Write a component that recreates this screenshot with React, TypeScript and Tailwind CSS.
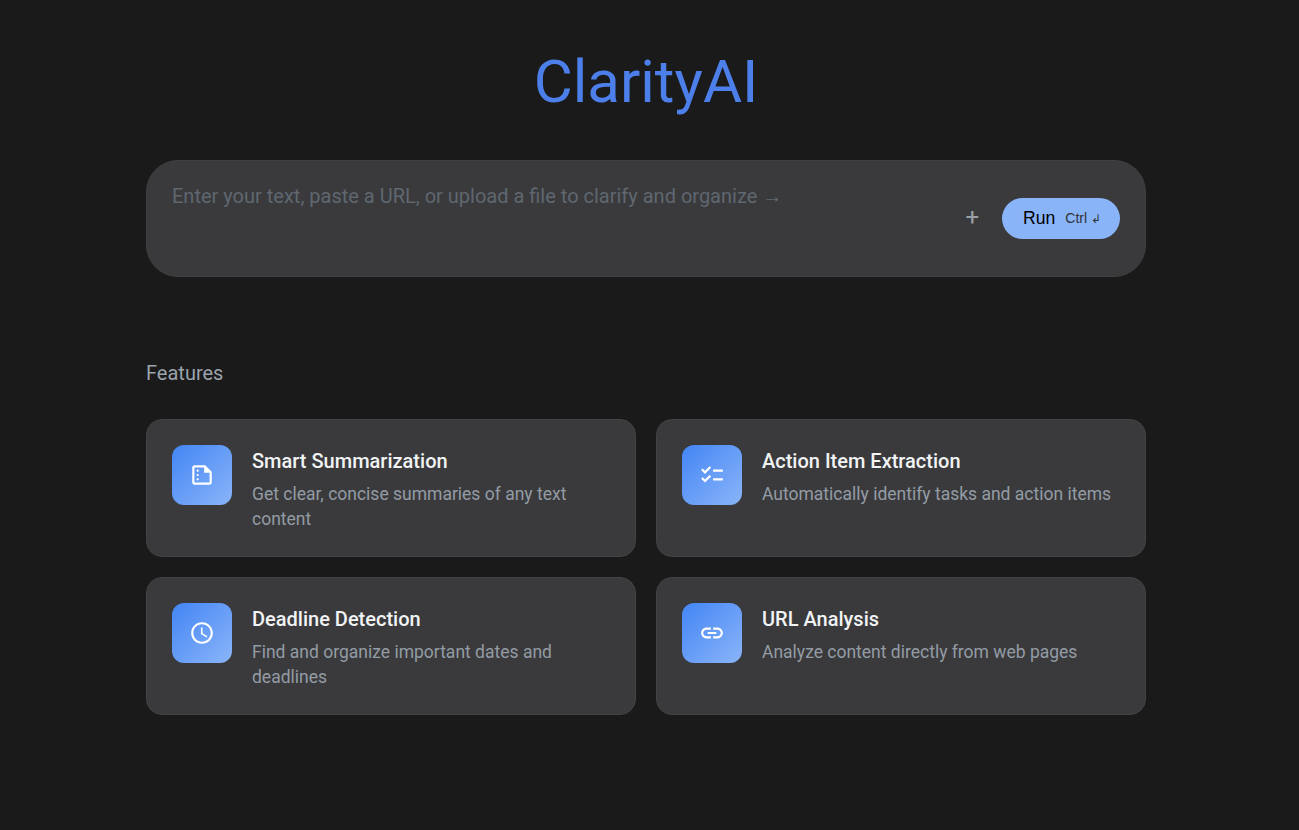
import React from 'react';
import { MdOutlineSummarize, MdChecklist, MdOutlineSchedule, MdLink } from 'react-icons/md';

const features = [
  {
    title: 'Smart Summarization',
    text: 'Get clear, concise summaries of any text content',
    icon: MdOutlineSummarize,
  },
  {
    title: 'Action Item Extraction',
    text: 'Automatically identify tasks and action items',
    icon: MdChecklist,
  },
  {
    title: 'Deadline Detection',
    text: 'Find and organize important dates and deadlines',
    icon: MdOutlineSchedule,
  },
  {
    title: 'URL Analysis',
    text: 'Analyze content directly from web pages',
    icon: MdLink,
  },
];

const App = () => {
  return (
    <div className="min-h-[830px] bg-[#1a1a1a] pr-[7px] font-['Roboto',sans-serif]">
      <div className="mx-auto w-[1000px] pt-[40px]">
        <h1 className="pt-[3px] text-center text-[60px] leading-[77px] font-normal text-[#4d7fea]">ClarityAI</h1>

        <div className="mt-[40px] flex h-[117px] justify-between rounded-[32px] border border-[#404043] bg-[#3a3a3c] pl-[25px] pr-[25px]">
          <p className="pt-[22px] text-[20px] leading-[26px] text-[#5f6770]">
            Enter your text, paste a URL, or upload a file to clarify and organize →
          </p>
          <div className="flex items-center gap-[23px]">
            <span className="pb-[4px] text-[24px] leading-none text-[#9aa0a6]">+</span>
            <button className="flex h-[41px] w-[118px] items-center justify-center gap-[10px] rounded-full bg-[#8ab4f8] pl-[2px] font-['Liberation_Sans',sans-serif] text-black">
              <span className="text-[17.6px]">Run</span>
              <span className="text-[14px] text-[#2f3338]">
                Ctrl <span className="text-[12px]">↲</span>
              </span>
            </button>
          </div>
        </div>

        <h2 className="mt-[83px] text-[20px] leading-[26px] font-normal text-[#9aa4ad]">Features</h2>

        <div className="mt-[33px] grid grid-cols-2 gap-[20px]">
          {features.map((item) => (
            <div
              key={item.title}
              className="flex h-[138px] gap-[20px] rounded-[16px] border border-[#434346] bg-[#3a3a3c] p-[25px]"
            >
              <div className="flex h-[60px] w-[60px] shrink-0 items-center justify-center rounded-[12px] bg-gradient-to-br from-[#4285f4] to-[#8ab4f8] text-white">
                <item.icon size={26} />
              </div>
              <div>
                <h3 className="pt-[1px] text-[20px] leading-[30px] font-medium text-[#f1f3f4]">{item.title}</h3>
                <p className="mt-[6px] text-[17.5px] leading-[25px] text-[#939ca5]">{item.text}</p>
              </div>
            </div>
          ))}
        </div>
      </div>
    </div>
  );
};

export default App;
